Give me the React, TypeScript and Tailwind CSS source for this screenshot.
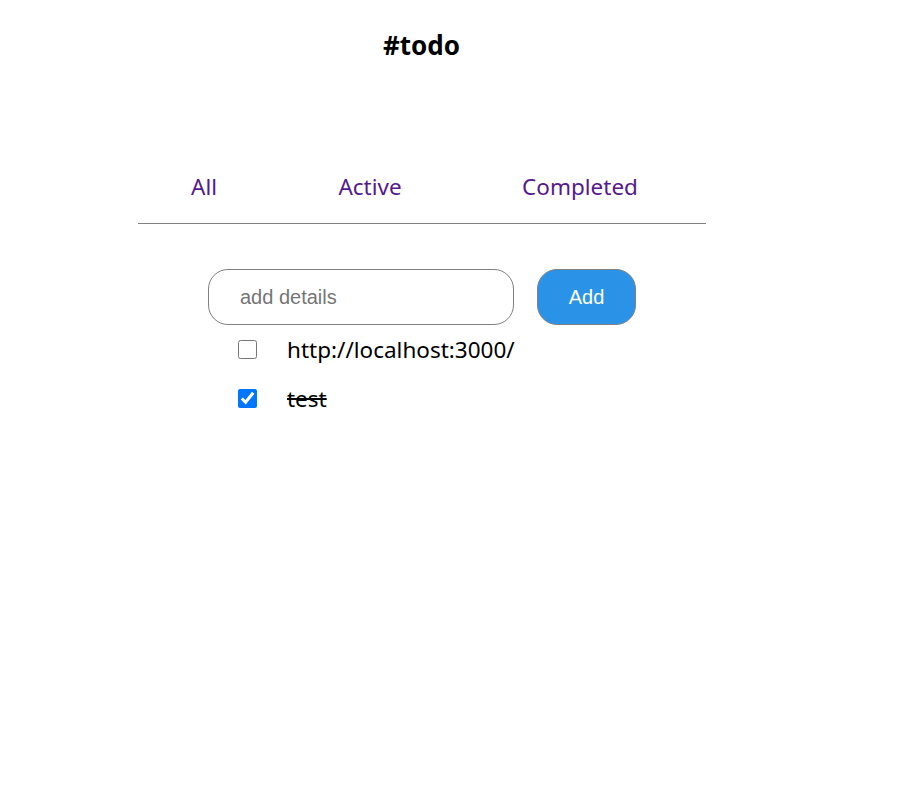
import React from "react";

export default function App() {
  return (
    <div className="min-h-[810px] w-[901px] bg-white" style={{ fontFamily: '"Noto Sans", "Open Sans", sans-serif' }}>
      <h1 className="pt-[28px] pl-[383px] text-[26px] font-bold leading-[34px] text-black">#todo</h1>
      <div className="ml-[138px] mt-[109px] w-[568px]">
        <div className="flex items-center pl-[33px] pb-[20px] border-b border-[#808080] text-[22.5px] leading-[32px] text-[#551A8B]">
          <span className="w-[66px] text-center">All</span>
          <span className="ml-[83px] w-[100px] text-center">Active</span>
          <span className="ml-[80px] w-[160px] text-center">Completed</span>
        </div>
        <div className="mt-[45px] flex gap-[23px] pl-[70px]">
          <input
            className="h-[56px] w-[306px] rounded-[20px] border border-[#808080] px-[31px] text-[20px] text-black outline-none placeholder:text-[#757575]"
            style={{ fontFamily: '"Liberation Sans", Arial, sans-serif' }}
            placeholder="add details"
          />
          <button
            className="h-[56px] w-[99px] rounded-[20px] border border-[#808080] bg-[#2A93E8] text-[20px] text-white"
            style={{ fontFamily: '"Liberation Sans", Arial, sans-serif' }}
          >
            Add
          </button>
        </div>
        <div className="mt-[8px] flex flex-col gap-[16px] pl-[100px]">
          <label className="flex items-center gap-[30px] text-[22.5px] leading-[33px] text-black">
            <input type="checkbox" className="h-[19px] w-[19px] m-0" />
            <span>http://localhost:3000/</span>
          </label>
          <label className="flex items-center gap-[30px] text-[22.5px] leading-[33px] text-black">
            <input type="checkbox" defaultChecked className="h-[19px] w-[19px] m-0 accent-[#0075ff]" />
            <span className="line-through">test</span>
          </label>
        </div>
      </div>
    </div>
  );
}
